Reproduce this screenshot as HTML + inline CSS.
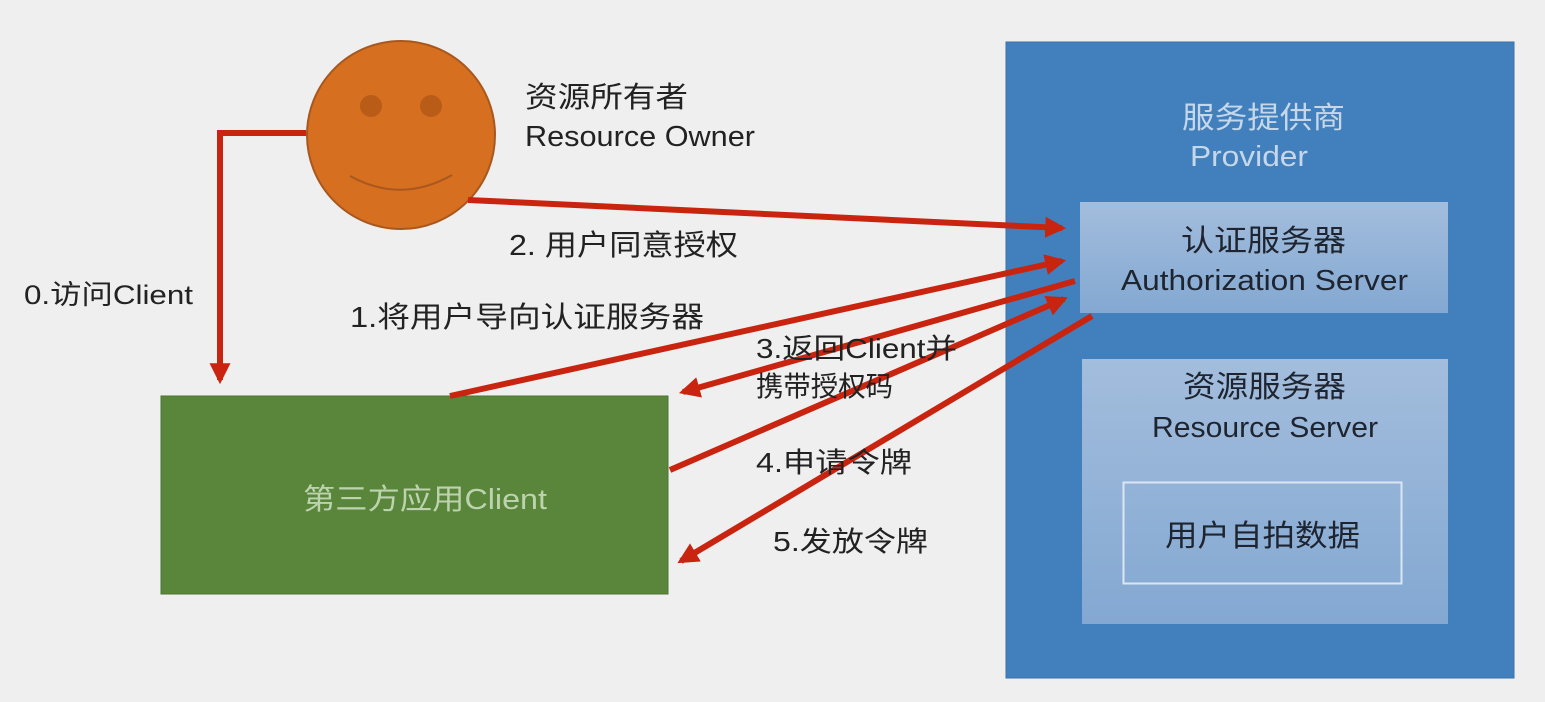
<!DOCTYPE html>
<html><head><meta charset="utf-8"><style>
html,body{margin:0;padding:0;background:#efefef;}
svg{display:block}
text{font-family:"Liberation Sans","Noto Sans CJK SC",sans-serif;}
</style></head><body>
<svg width="1545" height="702" viewBox="0 0 1545 702" xmlns="http://www.w3.org/2000/svg">
<defs>
<linearGradient id="lb" x1="0" y1="0" x2="0" y2="1"><stop offset="0" stop-color="#a3bddc"/><stop offset="1" stop-color="#83a8d2"/></linearGradient>
<marker id="ah" markerWidth="3.5" markerHeight="3.5" refX="2.8" refY="1.75" orient="auto" markerUnits="strokeWidth"><path d="M0,0 L3.5,1.75 L0,3.5 z" fill="#c9240f"/></marker>
</defs>
<rect width="1545" height="702" fill="#efefef"/>
<rect x="1006" y="42" width="508" height="636" fill="#4180bc" stroke="#3a72aa"/>
<text x="1182" y="128" font-size="30" fill="#c6d7ea" textLength="163" lengthAdjust="spacingAndGlyphs">服务提供商</text>
<text x="1190" y="166" font-size="29" fill="#c6d7ea" textLength="118" lengthAdjust="spacingAndGlyphs">Provider</text>
<rect x="1080" y="202" width="368" height="111" fill="url(#lb)"/>
<text x="1181" y="251" font-size="30" fill="#1e2530" textLength="165" lengthAdjust="spacingAndGlyphs">认证服务器</text>
<text x="1121" y="290" font-size="29" fill="#1e2530" textLength="287" lengthAdjust="spacingAndGlyphs">Authorization Server</text>
<rect x="1082" y="359" width="366" height="265" fill="url(#lb)"/>
<text x="1183" y="397" font-size="30" fill="#1e2530" textLength="163" lengthAdjust="spacingAndGlyphs">资源服务器</text>
<text x="1152" y="437" font-size="29" fill="#1e2530" textLength="226" lengthAdjust="spacingAndGlyphs">Resource Server</text>
<rect x="1123.5" y="482.5" width="278" height="101" fill="none" stroke="#dbe6f2" stroke-width="2"/>
<text x="1165" y="546" font-size="30" fill="#1e2530" textLength="195" lengthAdjust="spacingAndGlyphs">用户自拍数据</text>
<rect x="161" y="396" width="507" height="198" fill="#5a863c" stroke="#4d7433"/>
<text x="303" y="509" font-size="29" fill="#bcd3ad" textLength="244" lengthAdjust="spacingAndGlyphs">第三方应用Client</text>
<circle cx="401" cy="135" r="94" fill="#d66f1f" stroke="#a8581e" stroke-width="2"/>
<circle cx="371" cy="106" r="11" fill="#b85c18"/>
<circle cx="431" cy="106" r="11" fill="#b85c18"/>
<path d="M350,176 Q401,204 452,175" fill="none" stroke="#a8581e" stroke-width="2"/>
<text x="525" y="107" font-size="29" fill="#222" textLength="163" lengthAdjust="spacingAndGlyphs">资源所有者</text>
<text x="525" y="146" font-size="29" fill="#222" textLength="230" lengthAdjust="spacingAndGlyphs">Resource Owner</text>
<polyline points="306,133 220,133 220,380" fill="none" stroke="#c9240f" stroke-width="6" marker-end="url(#ah)"/>
<line x1="468" y1="200" x2="1062" y2="228" stroke="#c9240f" stroke-width="6" marker-end="url(#ah)"/>
<line x1="450" y1="396" x2="1062" y2="261" stroke="#c9240f" stroke-width="6" marker-end="url(#ah)"/>
<line x1="1075" y1="281" x2="683" y2="392" stroke="#c9240f" stroke-width="6" marker-end="url(#ah)"/>
<line x1="670" y1="470" x2="1064" y2="299" stroke="#c9240f" stroke-width="6" marker-end="url(#ah)"/>
<line x1="1092" y1="316" x2="681" y2="561" stroke="#c9240f" stroke-width="6" marker-end="url(#ah)"/>
<text x="24" y="304" font-size="27" fill="#222" textLength="169" lengthAdjust="spacingAndGlyphs">0.访问Client</text>
<text x="509" y="255" font-size="29" fill="#222" textLength="229" lengthAdjust="spacingAndGlyphs">2. 用户同意授权</text>
<text x="350" y="327" font-size="29" fill="#222" textLength="354" lengthAdjust="spacingAndGlyphs">1.将用户导向认证服务器</text>
<text x="756" y="358" font-size="28" fill="#222" textLength="201" lengthAdjust="spacingAndGlyphs">3.返回Client并</text>
<text x="756" y="396" font-size="28" fill="#222" textLength="137" lengthAdjust="spacingAndGlyphs">携带授权码</text>
<text x="756" y="472" font-size="28" fill="#222" textLength="156" lengthAdjust="spacingAndGlyphs">4.申请令牌</text>
<text x="773" y="551" font-size="28" fill="#222" textLength="155" lengthAdjust="spacingAndGlyphs">5.发放令牌</text>
</svg>
</body></html>
